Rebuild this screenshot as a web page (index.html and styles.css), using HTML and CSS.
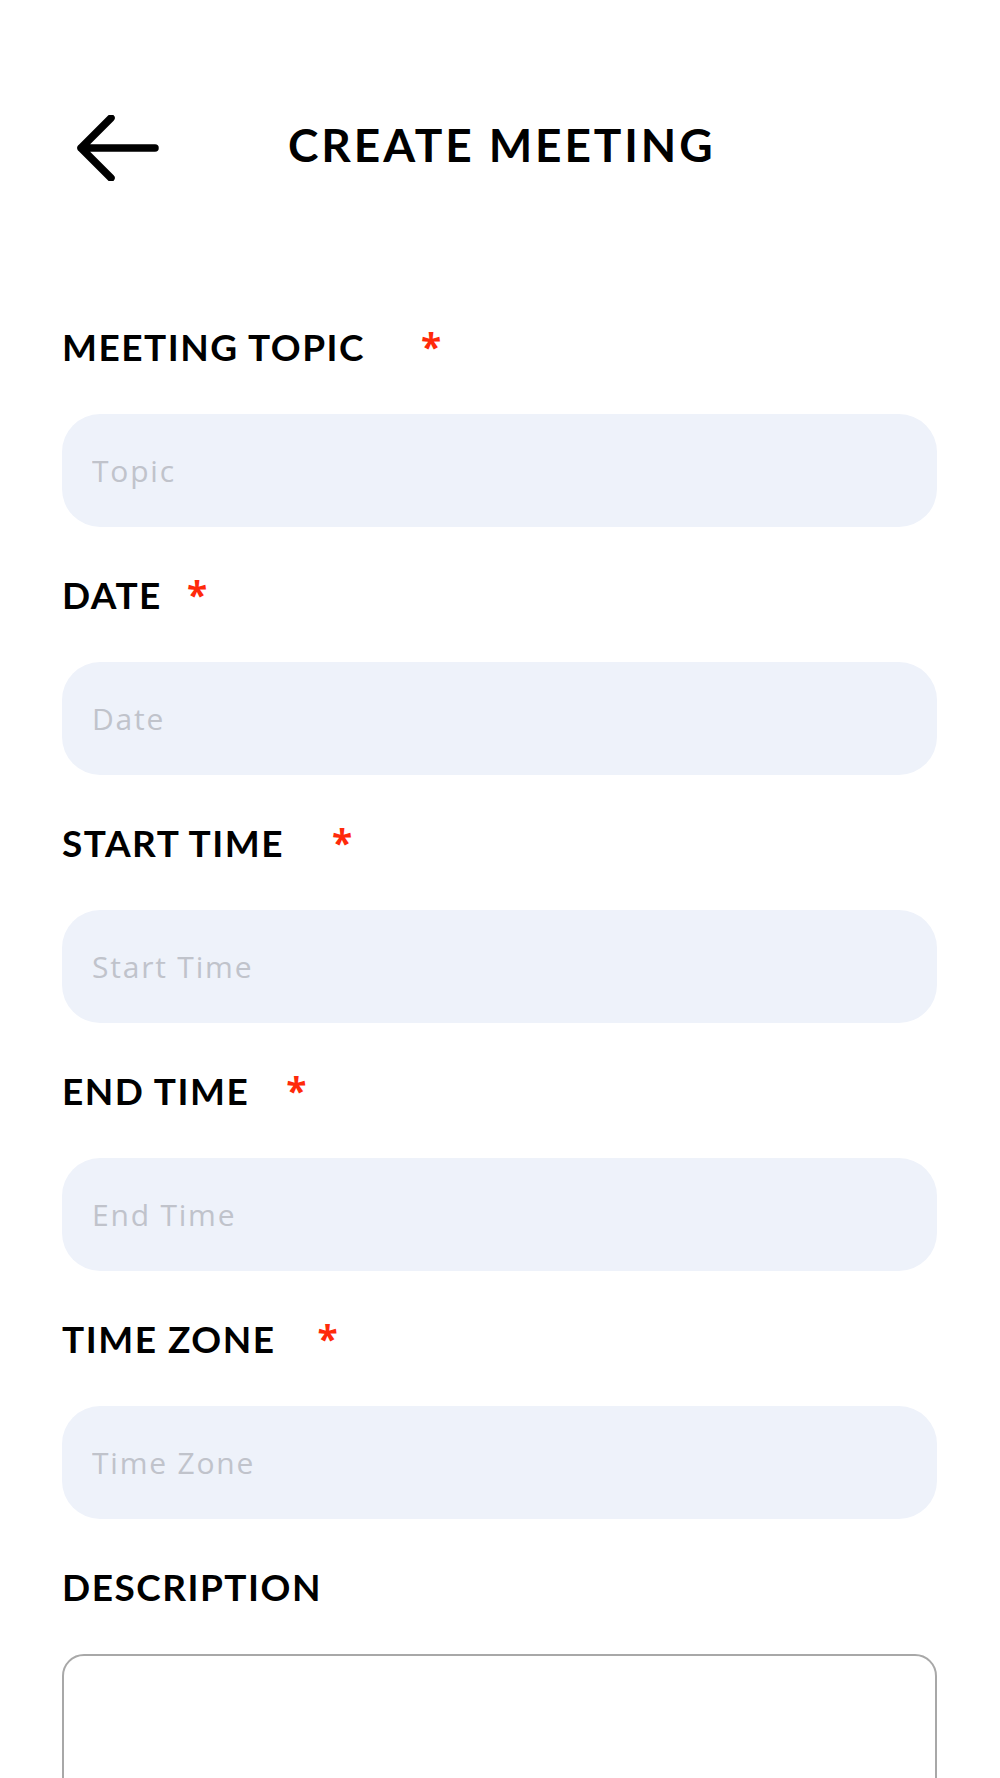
FILE: index.html
```html
<!DOCTYPE html>
<html lang="en">
<head>
<meta charset="utf-8">
<title>Create Meeting</title>
<link rel="stylesheet" href="styles.css">
</head>
<body>
<div class="screen">
  <header class="topbar">
    <button class="back-btn" aria-label="Back">
      <svg class="back-icon" width="82" height="66" viewBox="0 0 82 66" fill="none">
        <path d="M4 33 H78 M34 3 L4 33 L34 63" stroke="#000" stroke-width="7.5" stroke-linecap="round" stroke-linejoin="round"/>
      </svg>
    </button>
    <h1 class="title">CREATE MEETING</h1>
  </header>

  <form class="form">
    <div class="field">
      <label class="field-label">MEETING TOPIC<span class="req req-topic">*</span></label>
      <input class="field-input" type="text" placeholder="Topic">
    </div>
    <div class="field">
      <label class="field-label">DATE<span class="req req-date">*</span></label>
      <input class="field-input" type="text" placeholder="Date">
    </div>
    <div class="field">
      <label class="field-label">START TIME<span class="req req-start">*</span></label>
      <input class="field-input" type="text" placeholder="Start Time">
    </div>
    <div class="field">
      <label class="field-label">END TIME<span class="req req-end">*</span></label>
      <input class="field-input" type="text" placeholder="End Time">
    </div>
    <div class="field">
      <label class="field-label">TIME ZONE<span class="req req-tz">*</span></label>
      <input class="field-input" type="text" placeholder="Time Zone">
    </div>
    <div class="field">
      <label class="field-label">DESCRIPTION</label>
      <textarea class="field-textarea"></textarea>
    </div>
  </form>
</div>
</body>
</html>
```

FILE: styles.css
```css
* { box-sizing: border-box; }

html, body {
  margin: 0;
  padding: 0;
  background: #ffffff;
}

body {
  font-family: "Lato", "Open Sans", sans-serif;
  color: #000000;
  overflow: hidden;
}

.screen {
  width: 1000px;
  padding: 115px 63px 0 62px;
}

.topbar {
  display: flex;
  align-items: center;
}

.back-btn {
  border: 0;
  background: none;
  padding: 0;
  margin: 0 0 0 15px;
  display: flex;
  cursor: pointer;
}

.back-icon { display: block; }

.title {
  margin: 0 0 0 129px;
  padding-bottom: 7px;
  font-size: 46px;
  line-height: 55px;
  font-weight: 700;
  letter-spacing: 2.9px;
}

.form {
  display: flex;
  flex-direction: column;
  gap: 46px;
  margin-top: 144px;
}

.field {
  display: flex;
  flex-direction: column;
  gap: 45px;
}

.field-label {
  font-size: 37px;
  line-height: 44px;
  font-weight: 700;
  letter-spacing: 1.5px;
  white-space: nowrap;
}

.req {
  font-family: "Open Sans", "Lato", sans-serif;
  color: #ff2a0a;
  font-weight: 700;
  letter-spacing: 0;
}

.req-topic { margin-left: 56px; }
.req-date { margin-left: 25px; }
.req-start { margin-left: 48px; }
.req-end { margin-left: 37px; }
.req-tz { margin-left: 42px; }

.field-input {
  display: block;
  width: 100%;
  height: 113px;
  border: 0;
  border-radius: 38px;
  background: #eef2fa;
  padding: 0 30px;
  font-family: "Open Sans", "Lato", sans-serif;
  font-size: 30px;
  letter-spacing: 1.8px;
  color: #333;
  outline: none;
}

.field-input::placeholder {
  color: #c0c3cb;
}

.field-textarea {
  display: block;
  width: 100%;
  height: 300px;
  border: 2px solid #a8a8a8;
  border-radius: 22px;
  background: #ffffff;
  resize: none;
  font-family: "Open Sans", "Lato", sans-serif;
  font-size: 30px;
  padding: 20px 30px;
  outline: none;
}
```
